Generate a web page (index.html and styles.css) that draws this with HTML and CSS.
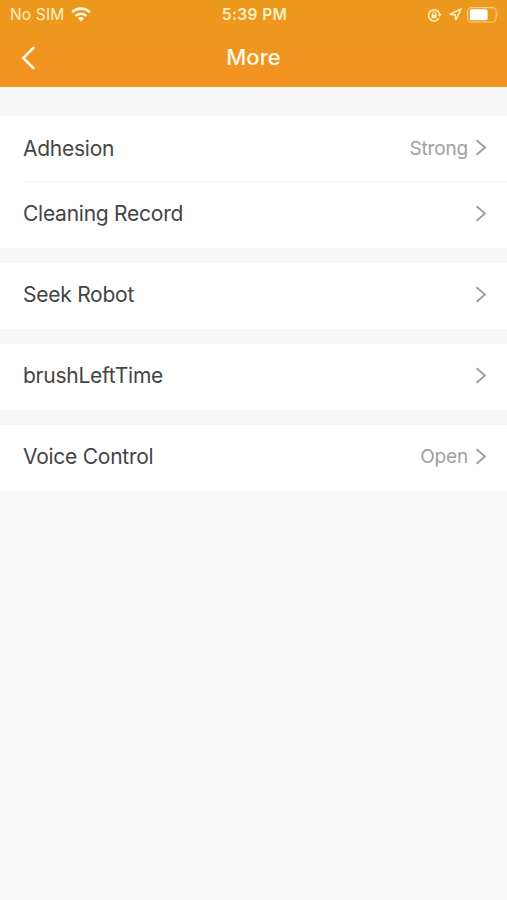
FILE: index.html
```html
<!DOCTYPE html>
<html lang="en">
<head>
  <meta charset="UTF-8" />
  <meta name="viewport" content="width=device-width, initial-scale=1.0"/>
  <title>More</title>
  <link rel="stylesheet" href="styles.css">
</head>
<body>

  <header class="header">
    <div class="status-bar">
      <div class="status-left">
        <span class="carrier">No SIM</span>
        <svg class="wifi" width="20" height="15" viewBox="0 0 20 15" fill="none" stroke="#fff8dc" stroke-width="2.6">
          <path d="M1.2 5.2a12.6 12.6 0 0 1 17.6 0"/>
          <path d="M4.7 8.9a7.6 7.6 0 0 1 10.6 0"/>
          <path d="M10 14.6 6.9 11.4a4.4 4.4 0 0 1 6.2 0z" fill="#fff8dc" stroke="none"/>
        </svg>
      </div>
      <div class="time">5:39 PM</div>
      <div class="status-right">
        <svg width="15" height="14" viewBox="0 0 15 14" fill="none" stroke="#ffeec0" stroke-width="1.6">
          <path d="M11.8 10.5A5.6 5.6 0 1 1 12.6 6"/>
          <path d="M10.6 6h4.2l-2.1 3z" fill="#ffeec0" stroke="none"/>
          <path d="M4.6 6.4h5v3.8h-5z" fill="#ffeec0" stroke="none"/>
          <path d="M5.6 6.6V5.3a1.5 1.5 0 0 1 3 0v1.3" stroke-width="1"/>
        </svg>
        <svg width="13" height="13" viewBox="0 0 13 13" fill="none" stroke="#ffeec0" stroke-width="1.6" stroke-linejoin="round">
          <path d="M12 1 1 6.3l5.2.6.6 5.1z"/>
        </svg>
        <svg class="battery" width="32" height="16" viewBox="0 0 32 16">
          <rect x=".6" y=".6" width="28.6" height="14.4" rx="4" fill="none" stroke="#f9cf83" stroke-width="1.1"/>
          <rect x="2.8" y="2.2" width="17.8" height="11" rx="1.8" fill="#fff"/>
          <path d="M30.4 5.6q1.4 2.2 0 4.6z" fill="#f9cf83"/>
        </svg>
      </div>
    </div>
    <div class="nav-bar">
      <svg class="back" width="14" height="24" viewBox="0 0 14 24" fill="none" stroke="#fff8e4" stroke-width="2.6" stroke-linecap="round">
        <path d="M12.4 1.8 2.2 12l10.2 10.2"/>
      </svg>
      <h1 class="title">More</h1>
    </div>
  </header>

  <main class="list">
    <div class="group">
      <div class="row">
        <span class="label">Adhesion</span>
        <span class="value">Strong</span>
        <svg class="arrow" width="12" height="18" viewBox="0 0 12 18"><path d="M1.5 1.3 10 8.5l-8.5 7.2"/></svg>
      </div>
      <div class="row">
        <span class="label">Cleaning Record</span>
        <svg class="arrow" width="12" height="18" viewBox="0 0 12 18"><path d="M1.5 1.3 10 8.5l-8.5 7.2"/></svg>
      </div>
    </div>
    <div class="group">
      <div class="row">
        <span class="label">Seek Robot</span>
        <svg class="arrow" width="12" height="18" viewBox="0 0 12 18"><path d="M1.5 1.3 10 8.5l-8.5 7.2"/></svg>
      </div>
    </div>
    <div class="group">
      <div class="row">
        <span class="label">brushLeftTime</span>
        <svg class="arrow" width="12" height="18" viewBox="0 0 12 18"><path d="M1.5 1.3 10 8.5l-8.5 7.2"/></svg>
      </div>
    </div>
    <div class="group">
      <div class="row">
        <span class="label">Voice Control</span>
        <span class="value">Open</span>
        <svg class="arrow" width="12" height="18" viewBox="0 0 12 18"><path d="M1.5 1.3 10 8.5l-8.5 7.2"/></svg>
      </div>
    </div>
  </main>

</body>
</html>
```
FILE: styles.css
```css
html, body {
  margin: 0;
  padding: 0;
  height: 100%;
}
body {
  background: #f8f8f8;
  font-family: Inter, "Liberation Sans", sans-serif;
  color: #444;
  overflow: hidden;
}
svg {
  display: block;
  flex: none;
}
.header {
  height: 87px;
  background: linear-gradient(#eb991c, #f39221);
  color: #fff8e4;
}
.status-bar {
  display: grid;
  grid-template-columns: 1fr auto 1fr;
  align-items: center;
  height: 29px;
  padding: 0 8px 0 10px;
  color: #ffefc4;
}
.status-left {
  display: flex;
  align-items: center;
  gap: 7px;
}
.carrier {
  font-size: 15.5px;
  letter-spacing: 0.15px;
}
.time {
  font-size: 15.5px;
  font-weight: 600;
  letter-spacing: 0.4px;
}
.status-right {
  display: flex;
  align-items: center;
  justify-content: flex-end;
  gap: 7px;
}
.battery {
  margin-left: -2px;
}
.nav-bar {
  display: grid;
  grid-template-columns: 1fr auto 1fr;
  align-items: center;
  height: 57px;
  padding: 0 21px;
}
.title {
  margin: 0;
  padding-bottom: 2px;
  font-size: 22px;
  font-weight: 500;
}
.list {
  display: flex;
  flex-direction: column;
  gap: 15px;
  padding-top: 29px;
  background: #f7f7f8;
}
.group {
  background: #fff;
}
.row {
  display: flex;
  align-items: center;
  height: 66px;
  margin-left: 23px;
  padding: 0 20px 3px 0;
  box-sizing: border-box;
}
.row:not(:last-child) {
  height: 65px;
  padding-bottom: 1px;
}
.row + .row {
  height: 67px;
  border-top: 1px solid #f1f1f1;
}
.label {
  flex: 1;
  font-size: 21px;
  letter-spacing: -0.25px;
}
.value {
  margin-right: 7px;
  font-size: 19px;
  letter-spacing: -0.15px;
  color: #a0a0a0;
}
.arrow {
  fill: none;
  stroke: #9c9c9c;
  stroke-width: 1.8;
}
```
